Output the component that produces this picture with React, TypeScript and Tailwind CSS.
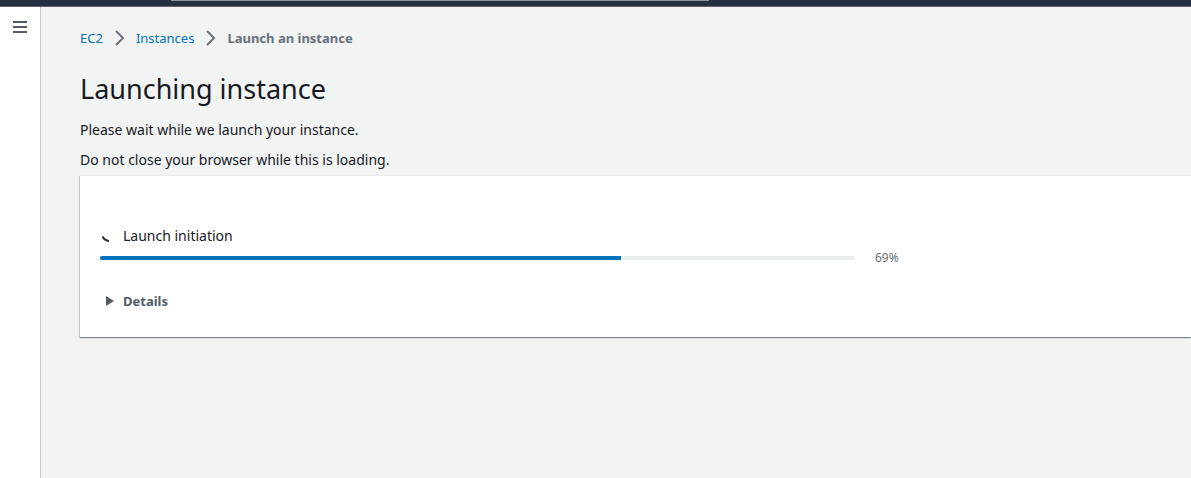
const percent = 69;

const crumbs = ["EC2", "Instances"];

function Chevron() {
  return (
    <svg className="h-4 w-4 shrink-0 text-[#687078]" viewBox="0 0 16 16" fill="none" stroke="currentColor" strokeWidth="2" aria-hidden="true">
      <path d="M4 1l7 7-7 7" />
    </svg>
  );
}

export default function App() {
  return (
    <div className="flex min-h-screen flex-col bg-[#f2f3f3] font-['Noto_Sans',sans-serif] text-sm text-[#16191f]">
      <header className="flex h-[7px] shrink-0 items-start border-b border-[#5a6472] bg-[#232f3e] pl-[171px]">
        <div className="h-px w-[538px] bg-[#879596]" />
      </header>
      <div className="flex grow">
        <aside className="w-[41px] shrink-0 border-r border-[#c5cccc] bg-white">
          <button type="button" aria-label="Open navigation" className="flex w-10 justify-center pt-3 text-[#545b64]">
            <svg className="h-4 w-4" viewBox="0 0 16 16" fill="none" stroke="currentColor" strokeWidth="2" aria-hidden="true">
              <path d="M1 3h14M1 8h14M1 13h14" />
            </svg>
          </button>
        </aside>
        <main className="min-w-0 grow pt-5 pl-[39px]">
          <nav aria-label="Breadcrumbs">
            <ol className="flex items-center text-[13px] leading-[22px]">
              {crumbs.map((crumb) => (
                <li key={crumb} className="flex items-center gap-[9px] pr-2">
                  <a href="#" className="text-[#0073bb]">{crumb}</a>
                  <Chevron />
                </li>
              ))}
              <li className="font-bold text-[#687078]" aria-current="page">Launch an instance</li>
            </ol>
          </nav>
          <h1 className="mt-[22px] text-[27px] leading-9">Launching instance</h1>
          <p className="mt-3 leading-[22px]">Please wait while we launch your instance.</p>
          <p className="mt-2 leading-[22px]">Do not close your browser while this is loading.</p>
          <section className="mt-1 border-t border-[#eaeded] bg-white pt-12 pb-[25px] pl-5 shadow-[0_1px_1px_0_rgba(0,28,36,0.3),1px_1px_1px_0_rgba(0,28,36,0.15),-1px_1px_1px_0_rgba(0,28,36,0.15)]">
            <div className="flex items-center gap-[7px]">
              <svg className="h-4 w-4 text-[#2b2f36]" viewBox="0 0 16 16" fill="none" stroke="currentColor" strokeWidth="2" aria-hidden="true">
                <path d="M2.500 8.500Q4.500 12.500 9 13" />
              </svg>
              <span id="progress-label" className="leading-6">Launch initiation</span>
            </div>
            <div className="flex items-center gap-5">
              <div
                role="progressbar"
                aria-labelledby="progress-label"
                aria-valuenow={percent}
                aria-valuemin={0}
                aria-valuemax={100}
                className="h-1 w-full max-w-[755px] overflow-hidden rounded-full bg-[#eaeded]"
              >
                <div className="h-full bg-[#0073bb]" style={{ width: `${percent}%` }} />
              </div>
              <span className="text-xs leading-5 text-[#687078]">{percent}%</span>
            </div>
            <button type="button" aria-expanded="false" className="mt-[22px] flex items-center gap-[7px] text-[13px] font-bold leading-[22px] text-[#545b64]">
              <svg className="h-4 w-4" viewBox="0 0 16 16" fill="currentColor" aria-hidden="true">
                <path d="M6 3v10l8-5z" />
              </svg>
              Details
            </button>
          </section>
        </main>
      </div>
    </div>
  );
}
